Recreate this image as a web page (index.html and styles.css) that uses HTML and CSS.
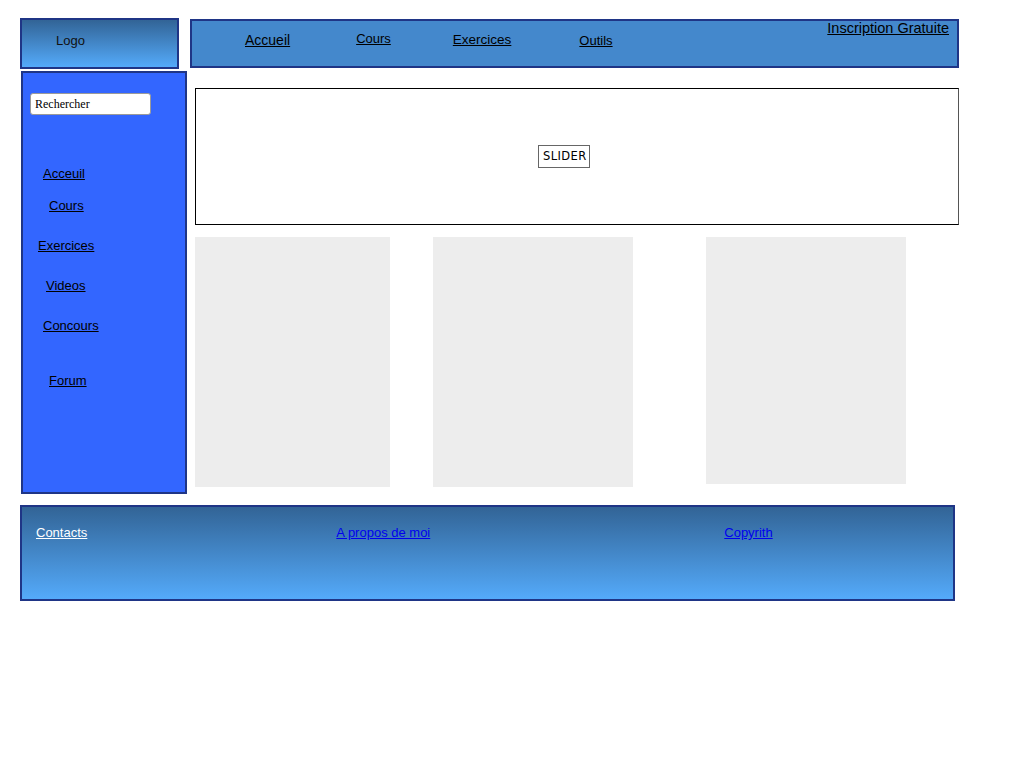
FILE: index.html
```html
<!DOCTYPE html>
<html lang="fr">
<head>
    <meta http-equiv="Content-Type" content="text/html; charset=UTF-8">
    <title>Accueil</title>
    <link rel="stylesheet" href="styles.css">
</head>
<body>
    <!-- Header -->
    <div class="top">
        <div class="logo">Logo</div>
        <div class="nav">
            <a href="#" class="nav-accueil">Accueil</a>
            <a href="#" class="nav-cours">Cours</a>
            <a href="#" class="nav-exercices">Exercices</a>
            <a href="#" class="nav-outils">Outils</a>
            <a href="#" class="nav-inscription">Inscription Gratuite</a>
        </div>
    </div>

    <!-- Middle -->
    <div class="middle">
        <div class="sidebar">
            <input type="text" class="search" value="Rechercher">
            <a href="#" class="side-acceuil">Acceuil</a>
            <a href="#" class="side-cours">Cours</a>
            <a href="#" class="side-exercices">Exercices</a>
            <a href="#" class="side-videos">Videos</a>
            <a href="#" class="side-concours">Concours</a>
            <a href="#" class="side-forum">Forum</a>
        </div>

        <div class="content">
            <div class="slider">
                <span class="slider-label">SLIDER</span>
            </div>
            <div class="cards">
                <div class="card card-1"></div>
                <div class="card card-2"></div>
                <div class="card card-3"></div>
            </div>
        </div>
    </div>

    <!-- Footer -->
    <div class="footer">
        <a href="#" class="foot-contacts">Contacts</a>
        <a href="#" class="foot-propos">A propos de moi</a>
        <a href="#" class="foot-copy">Copyrith</a>
    </div>
</body>
</html>
```

FILE: styles.css
```css
/* General Reset */
* {
    margin: 0;
    padding: 0;
    box-sizing: border-box;
}

body {
    background-color: #FFFFFF;
    font-family: "Liberation Sans", Arial, sans-serif;
    font-size: 13px;
    color: #000000;
}

a {
    color: #000000;
    text-decoration: underline;
}

/* Header */
.top {
    display: flex;
    align-items: flex-start;
    padding: 18px 0 0 20px;
    gap: 11px;
}

.logo {
    width: 159px;
    height: 51px;
    border: 2px solid #1F3586;
    background: linear-gradient(#326496, #54aafa);
    padding: 13px 0 0 34px;
    font-size: 13px;
    color: #111111;
}

.nav {
    display: flex;
    align-items: flex-start;
    width: 769px;
    height: 49px;
    margin-top: 1px;
    border: 2px solid #1F3586;
    background-color: #4488CC;
}

.nav-accueil {
    font-size: 14px;
    margin: 11px 0 0 53px;
}

.nav-cours {
    margin: 10px 0 0 66px;
}

.nav-exercices {
    font-size: 13.5px;
    margin: 11px 0 0 62px;
}

.nav-outils {
    margin: 12px 0 0 68px;
}

.nav-inscription {
    font-size: 14.5px;
    margin: -1px 8px 0 auto;
}

/* Middle */
.middle {
    display: flex;
    align-items: flex-start;
    padding: 2px 0 0 21px;
    gap: 8px;
}

.sidebar {
    display: flex;
    flex-direction: column;
    align-items: flex-start;
    width: 166px;
    height: 423px;
    border: 2px solid #1F3586;
    background-color: #3366FF;
    padding: 20px 0 0 7px;
}

.sidebar a {
    line-height: 15px;
}

.search {
    width: 121px;
    height: 22px;
    border: 1px solid #9a9a9a;
    border-radius: 3px;
    padding-left: 4px;
    font-family: "Liberation Serif", "Times New Roman", serif;
    font-size: 12px;
    color: #000000;
    background-color: #FFFFFF;
}

.side-acceuil {
    margin: 51px 0 0 13px;
}

.side-cours {
    margin: 17px 0 0 19px;
}

.side-exercices {
    margin: 25px 0 0 8px;
}

.side-videos {
    margin: 25px 0 0 16px;
}

.side-concours {
    margin: 25px 0 0 13px;
}

.side-forum {
    margin: 40px 0 0 19px;
}

.content {
    display: flex;
    flex-direction: column;
    padding-top: 17px;
    gap: 12px;
}

.slider {
    display: flex;
    align-items: center;
    width: 764px;
    height: 137px;
    border: 1px solid #000000;
    border-right-color: #555555;
    padding-left: 342px;
}

.slider-label {
    border: 1px solid #666666;
    padding: 3px 2px 3px 4px;
    font-family: "Comic Sans MS", "DejaVu Sans", sans-serif;
    font-size: 11.5px;
    line-height: 15px;
    letter-spacing: 0.4px;
}

.cards {
    display: flex;
    align-items: flex-start;
}

.card {
    background-color: #EDEDED;
    height: 250px;
}

.card-1 {
    width: 195px;
}

.card-2 {
    width: 200px;
    margin-left: 43px;
}

.card-3 {
    width: 200px;
    height: 247px;
    margin-left: 73px;
}

/* Footer */
.footer {
    display: flex;
    align-items: flex-start;
    width: 935px;
    height: 96px;
    margin: 11px 0 0 20px;
    border: 2px solid #1F3586;
    background: linear-gradient(#326496, #54aafa);
    padding: 18px 0 0 14px;
    line-height: 15px;
}

.foot-contacts {
    color: #FFFFFF;
}

.foot-propos {
    color: #0000EE;
    margin-left: 249px;
}

.foot-copy {
    color: #0000EE;
    margin-left: 294px;
}
```
